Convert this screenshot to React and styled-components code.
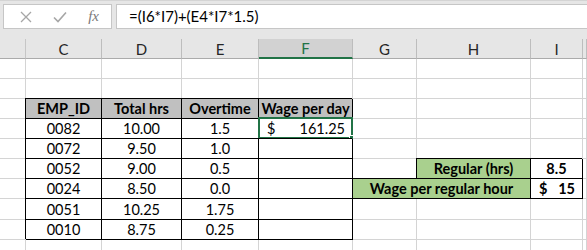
import styled, { createGlobalStyle } from "styled-components";

const GlobalStyle = createGlobalStyle`
    body {
        margin: 0;
        background: #ffffff;
        font-family: Lato, "Liberation Sans", sans-serif;
    }
`;

const columns = ["", "C", "D", "E", "F", "G", "H", "I", ""];
const colWidths = "26px 76px 80px 77px 94px 64px 114px 52px 1fr";
const rowHeights = "20px 20px 20px 20px 20px 20px 20px 20px 21px 20px 20px";

const table = [
    ["EMP_ID", "Total hrs", "Overtime", "Wage per day"],
    ["0082", "10.00", "1.5", null],
    ["0072", "9.50", "1.0", ""],
    ["0052", "9.00", "0.5", ""],
    ["0024", "8.50", "0.0", ""],
    ["0051", "10.25", "1.75", ""],
    ["0010", "8.75", "0.25", ""],
];

function App() {
    const blankRow = (key) => (
        <>
            <RowHead key={key + "h"} />
            {[1, 2, 3, 4, 5, 6, 7, 8].map(c => <Cell key={key + c} />)}
        </>
    );

    return (
        <Page>
            <GlobalStyle />
            <FormulaBar>
                <IconBox>
                    <svg width="12" height="12" viewBox="0 0 12 12">
                        <path d="M1 1 L11 11 M11 1 L1 11" stroke="#a6a6a6" strokeWidth="1.3" fill="none" />
                    </svg>
                    <svg width="14" height="12" viewBox="0 0 14 12">
                        <path d="M1 6.5 L5 10.5 L13 1.5" stroke="#a6a6a6" strokeWidth="1.6" fill="none" />
                    </svg>
                    <Fx>fx</Fx>
                </IconBox>
                <FormulaInput>=(I6*I7)+(E4*I7*1.5)</FormulaInput>
            </FormulaBar>
            <Sheet>
                {columns.map((c, i) => (
                    <ColHead key={"c" + i} $active={c === "F"} $first={i === 0}>{c}</ColHead>
                ))}
                {blankRow("r0")}
                {blankRow("r1")}
                {table.map((row, r) => (
                    <>
                        <RowHead key={"t" + r} />
                        {row.map((v, c) => {
                            if (v === null) {
                                return (
                                    <Cell key={"t" + r + c} $boxed $split>
                                        <span>$</span><span>161.25</span>
                                        <Selection><Handle /></Selection>
                                    </Cell>
                                );
                            }
                            return (
                                <Cell key={"t" + r + c} $boxed $bold={r === 0} $fill={r === 0 ? "#c0c0c0" : undefined}>
                                    {v}
                                </Cell>
                            );
                        })}
                        {r === 3 ? (
                            <>
                                <Cell />
                                <Cell $boxed $bold $fill="#a9d08e">Regular (hrs)</Cell>
                                <Cell $boxed $bold>8.5</Cell>
                                <Cell />
                            </>
                        ) : r === 4 ? (
                            <>
                                <Cell $boxed $bold $fill="#a9d08e" $span={2}>Wage per regular hour</Cell>
                                <Cell $boxed $bold $split><span>$</span><span>15</span></Cell>
                                <Cell />
                            </>
                        ) : (
                            <>
                                <Cell />
                                <Cell />
                                <Cell />
                                <Cell />
                            </>
                        )}
                    </>
                ))}
                {blankRow("r9")}
                {blankRow("r10")}
            </Sheet>
        </Page>
    );
}

export default App;

const Page = styled.div`
    width: 587px;
    height: 250px;
    overflow: hidden;
    background: #ffffff;
`;

const FormulaBar = styled.div`
    display: flex;
    align-items: flex-start;
    gap: 4px;
    height: 39px;
    box-sizing: border-box;
    padding: 3px 0 0 3px;
    background: #e6e6e6;
    border-top: 1px solid #d4d4d4;
`;

const IconBox = styled.div`
    display: flex;
    align-items: center;
    justify-content: space-between;
    box-sizing: border-box;
    width: 109px;
    height: 25px;
    padding: 0 12px 0 16px;
    background: #ffffff;
    border: 1px solid #c6c6c6;
`;

const Fx = styled.span`
    font-family: "Liberation Serif", serif;
    font-style: italic;
    font-size: 15px;
    color: #7a7a7a;
`;

const FormulaInput = styled.div`
    flex: 1;
    box-sizing: border-box;
    height: 25px;
    padding-left: 12px;
    background: #ffffff;
    border: 1px solid #c6c6c6;
    border-right: none;
    font-size: 15px;
    line-height: 23px;
    color: #000000;
`;

const Sheet = styled.div`
    display: grid;
    grid-template-columns: ${colWidths};
    grid-template-rows: ${rowHeights};
`;

const ColHead = styled.div`
    display: flex;
    align-items: center;
    justify-content: center;
    box-sizing: border-box;
    background: ${({ $active }) => $active ? "#d2d2d2" : "#e6e6e6"};
    border-right: 1px solid ${({ $first }) => $first ? "#c6c6c6" : "#bdbdbd"};
    border-bottom: ${({ $active }) => $active ? "2px solid #217346" : "1px solid #ababab"};
    font-size: 15px;
    color: ${({ $active }) => $active ? "#217346" : "#262626"};
`;

const RowHead = styled.div`
    box-sizing: border-box;
    background: #ffffff;
    border-right: 1px solid #d4d4d4;
    border-bottom: 1px solid #d4d4d4;
`;

const Cell = styled.div`
    position: relative;
    display: flex;
    align-items: flex-end;
    justify-content: ${({ $split }) => $split ? "space-between" : "center"};
    box-sizing: border-box;
    grid-column: ${({ $span }) => $span ? `span ${$span}` : "auto"};
    padding: ${({ $split }) => $split ? "0 7px 0 8px" : "0 1px"};
    background: ${({ $fill }) => $fill || "#ffffff"};
    border-right: 1px solid ${({ $boxed }) => $boxed ? "#000000" : "#d4d4d4"};
    border-bottom: 1px solid ${({ $boxed }) => $boxed ? "#000000" : "#d4d4d4"};
    box-shadow: ${({ $boxed }) => $boxed ? "-1px -1px 0 0 #000000" : "none"};
    font-size: 14.5px;
    line-height: 18px;
    font-weight: ${({ $bold }) => $bold ? 700 : 400};
    color: #000000;
    white-space: nowrap;
`;

const Selection = styled.div`
    position: absolute;
    top: -2px;
    left: -1px;
    right: -1px;
    bottom: -1px;
    border: 2px solid #217346;
`;

const Handle = styled.div`
    position: absolute;
    right: -5px;
    bottom: -5px;
    width: 5px;
    height: 5px;
    background: #217346;
    border: 1px solid #ffffff;
`;
